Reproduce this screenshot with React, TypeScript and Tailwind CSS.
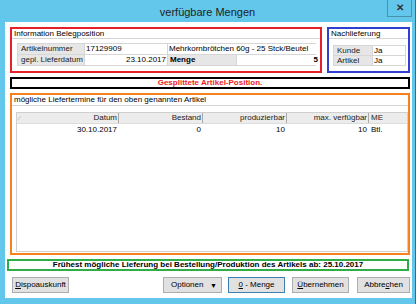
export default function App() {
  const btnBase =
    "h-[16px] bg-[#e1e1e1] border flex items-center text-[8px] text-black";
  const btn = `${btnBase} justify-center`;
  return (
    <div className="w-[416px] h-[304px] bg-[#62c7ea] flex flex-col border-r border-[#3e6b7b] font-['Liberation_Sans',Arial,sans-serif] text-[8px] text-black overflow-hidden leading-none">
      {/* Title bar */}
      <div className="h-[22px] grid grid-cols-[1fr_auto_1fr] shrink-0">
        <div />
        <div className="text-[11px] text-[#222] leading-[22px] pt-[1px]">verfügbare Mengen</div>
        <div className="flex justify-end pr-[3px]">
          <div className="w-[25px] h-[17px] border border-t-0 border-[#4a93ad] flex items-center justify-center text-[10px] text-[#333] font-bold">
            ✕
          </div>
        </div>
      </div>

      {/* Client */}
      <div className="ml-[5px] mr-[3px] h-[276px] bg-white pl-[5px] pr-[2px] pt-[5px] pb-[5px] flex flex-col">
        {/* Top row */}
        <div className="flex h-[46px] gap-[5px]">
          {/* Red group */}
          <div className="w-[312px] border-2 border-[#e5202a] flex flex-col">
            <div className="h-[10px] pl-[2px] flex items-center border-b border-[#d4d4d4]">Information Belegposition</div>
            <div className="pl-[5px] pr-[4px] pt-[4px]">
              <div className="grid grid-cols-[66px_82px_68px_83px] grid-rows-[10px_10px] gap-px bg-[#d6d6d6] border border-[#d6d6d6]">
                <div className="bg-[#e6e6e6] flex items-center pl-[3px] text-[#222]">Artikelnummer</div>
                <div className="bg-white flex items-center pl-[1px]">17129909</div>
                <div className="bg-white flex items-center pl-[1px] col-span-2">Mehrkornbrötchen 60g - 25 Stck/Beutel</div>
                <div className="bg-[#e6e6e6] flex items-center pl-[3px] text-[#222]">gepl. Lieferdatum</div>
                <div className="bg-white flex items-center justify-end pr-[1px]">23.10.2017</div>
                <div className="bg-[#e6e6e6] flex items-center pl-[2px] font-bold">Menge</div>
                <div className="bg-white flex items-center justify-end pr-[2px] font-bold">5</div>
              </div>
            </div>
          </div>
          {/* Blue group */}
          <div className="flex-1 border-2 border-[#2f3fcf] flex flex-col">
            <div className="h-[10px] pl-[2px] flex items-center border-b border-[#d4d4d4]">Nachlieferung</div>
            <div className="pl-[4px] pr-[2px] pt-[6px]">
              <div className="grid grid-cols-[38px_1fr] grid-rows-[9px_9px] gap-px bg-[#d6d6d6] border border-[#d6d6d6]">
                <div className="bg-[#e6e6e6] flex items-center pl-[3px] text-[#222]">Kunde</div>
                <div className="bg-white flex items-center pl-[1px]">Ja</div>
                <div className="bg-[#e6e6e6] flex items-center pl-[3px] text-[#222]">Artikel</div>
                <div className="bg-white flex items-center pl-[1px]">Ja</div>
              </div>
            </div>
          </div>
        </div>

        {/* Black box */}
        <div className="mt-[4px] h-[12px] border-2 border-black flex items-center justify-center font-bold text-[#ee1c25]">
          Gesplittete Artikel-Position.
        </div>

        {/* Orange box */}
        <div className="mt-[4px] h-[162px] border-2 border-[#f5811f] flex flex-col">
          <div className="h-[11px] pl-[2px] flex items-center border-b border-[#d4d4d4]">
            mögliche Liefertermine für den oben genannten Artikel
          </div>
          <div className="flex-1 pl-[4px] pt-[6px] pb-[1px]">
            <div className="h-full border border-[#cfcfcf] flex flex-col">
              <div className="h-[11px] bg-[#ececec] border-b border-[#dcdcdc] grid grid-cols-[102px_84px_84px_82px_1fr] text-[#222]">
                <div className="flex items-center justify-between pl-[2px] pr-[1px] border-r border-[#a8a8a8]">
                  <span className="text-[#999] text-[6px]">⁄</span>
                  <span>Datum</span>
                </div>
                <div className="flex items-center justify-end pr-[1px] border-r border-[#a8a8a8]">Bestand</div>
                <div className="flex items-center justify-end pr-[1px] border-r border-[#a8a8a8]">produzierbar</div>
                <div className="flex items-center justify-end pr-[1px] border-r border-[#a8a8a8]">max. verfügbar</div>
                <div className="flex items-center pl-[2px]">ME</div>
              </div>
              <div className="h-[11px] grid grid-cols-[102px_84px_84px_82px_1fr]">
                <div className="flex items-center justify-end pr-[2px]">30.10.2017</div>
                <div className="flex items-center justify-end pr-[2px]">0</div>
                <div className="flex items-center justify-end pr-[2px]">10</div>
                <div className="flex items-center justify-end pr-[2px]">10</div>
                <div className="flex items-center pl-[2px]">Btl.</div>
              </div>
            </div>
          </div>
        </div>

        {/* Green box */}
        <div className="mt-[4px] -ml-[3px] mr-[1px] h-[12px] border-2 border-[#2fae48] flex items-center justify-center font-bold">
          Frühest mögliche Lieferung bei Bestellung/Produktion des Artikels ab: 25.10.2017
        </div>

        {/* Buttons */}
        <div className="mt-[6px] flex items-center">
          <div className={`${btn} border-[#adadad] ml-[2px] w-[57px]`}>
            <span><span className="underline">D</span>ispoauskunft</span>
          </div>
          <div className={`${btnBase} border-[#adadad] justify-between ml-[94px] w-[59px] pl-[7px] pr-[4px]`}>
            <span>Optionen</span>
            <span className="text-[7px]">▼</span>
          </div>
          <div className={`${btn} ml-[6px] w-[57px] border-[#3c7fb1]`}>
            <span><span className="underline">0</span> - Menge</span>
          </div>
          <div className={`${btn} border-[#adadad] ml-[7px] w-[57px]`}>
            <span><span className="underline">Ü</span>bernehmen</span>
          </div>
          <div className={`${btn} border-[#adadad] ml-[8px] w-[53px]`}>
            <span>Abbre<span className="underline">c</span>hen</span>
          </div>
        </div>
      </div>
    </div>
  );
}
